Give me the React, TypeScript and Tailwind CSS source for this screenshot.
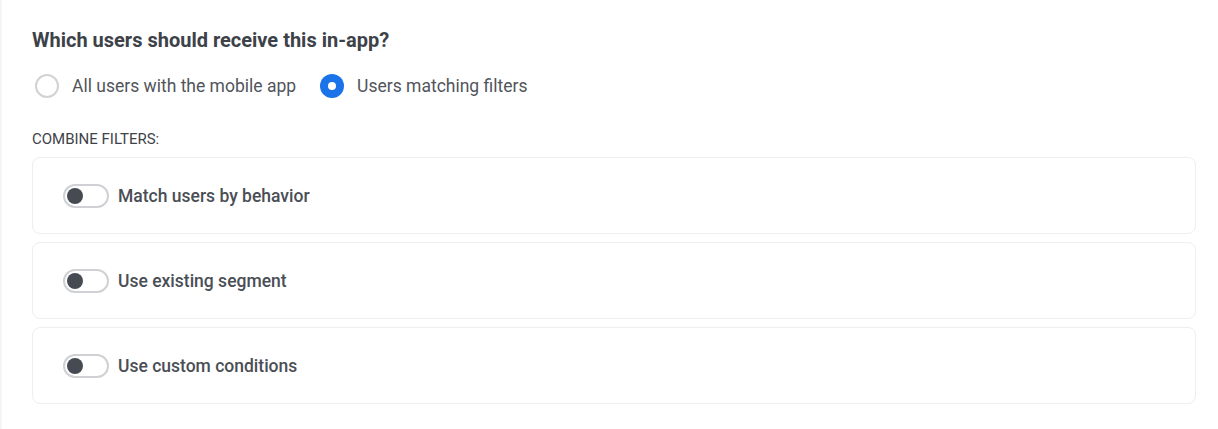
import { useState } from "react";

// ---- 单选项 ----

function Radio({ checked, label, onClick }: { checked: boolean; label: string; onClick: () => void }) {
  return (
    <button type="button" className="flex items-center gap-[13px]" onClick={onClick}>
      {checked ? (
        <span className="flex h-6 w-6 items-center justify-center rounded-full bg-[#1a73e8]">
          <span className="h-2 w-2 rounded-full bg-white" />
        </span>
      ) : (
        <span className="h-6 w-6 rounded-full border-2 border-[#d0d2d5] bg-white" />
      )}
      <span className="text-[17.5px] text-[#51555b]">{label}</span>
    </button>
  );
}

// ---- 开关卡片 ----

function FilterCard({ label }: { label: string }) {
  const [on, setOn] = useState(false);
  return (
    <div className="flex h-[77px] items-center rounded-lg border border-[#eceef1] px-[30px]">
      <button
        type="button"
        className={
          on
            ? "flex h-6 w-[46px] items-center justify-end rounded-full border-2 border-[#1a73e8] bg-[#1a73e8] px-[2px]"
            : "flex h-6 w-[46px] items-center rounded-full border-2 border-[#cfd1d4] bg-white px-[2px]"
        }
        onClick={() => setOn(!on)}
      >
        <span className={on ? "h-4 w-4 rounded-full bg-white" : "h-4 w-4 rounded-full bg-[#464b53]"} />
      </button>
      <span className="ml-[9px] text-[17.5px] font-medium text-[#4a4e55]">{label}</span>
    </div>
  );
}

export default function App() {
  const [target, setTarget] = useState<"all" | "filters">("filters");

  return (
    <div
      className="min-h-[429px] border-l-2 border-[#f5f5f6] bg-white pl-[30px] pr-[22px] pt-[26px]"
      style={{ fontFamily: "Roboto, 'Liberation Sans', sans-serif" }}
    >
      <h2 className="text-[20px] font-bold leading-[28px] text-[#3d4249]">Which users should receive this in-app?</h2>

      <div className="mt-[19px] flex items-center gap-[24px] pl-[3px]">
        <Radio checked={target === "all"} label="All users with the mobile app" onClick={() => setTarget("all")} />
        <Radio checked={target === "filters"} label="Users matching filters" onClick={() => setTarget("filters")} />
      </div>

      <div className="mt-[31px] text-[15px] uppercase leading-[18px] text-[#3f4349]">Combine filters:</div>

      <div className="mt-[9px] flex flex-col gap-[8px]">
        <FilterCard label="Match users by behavior" />
        <FilterCard label="Use existing segment" />
        <FilterCard label="Use custom conditions" />
      </div>
    </div>
  );
}
